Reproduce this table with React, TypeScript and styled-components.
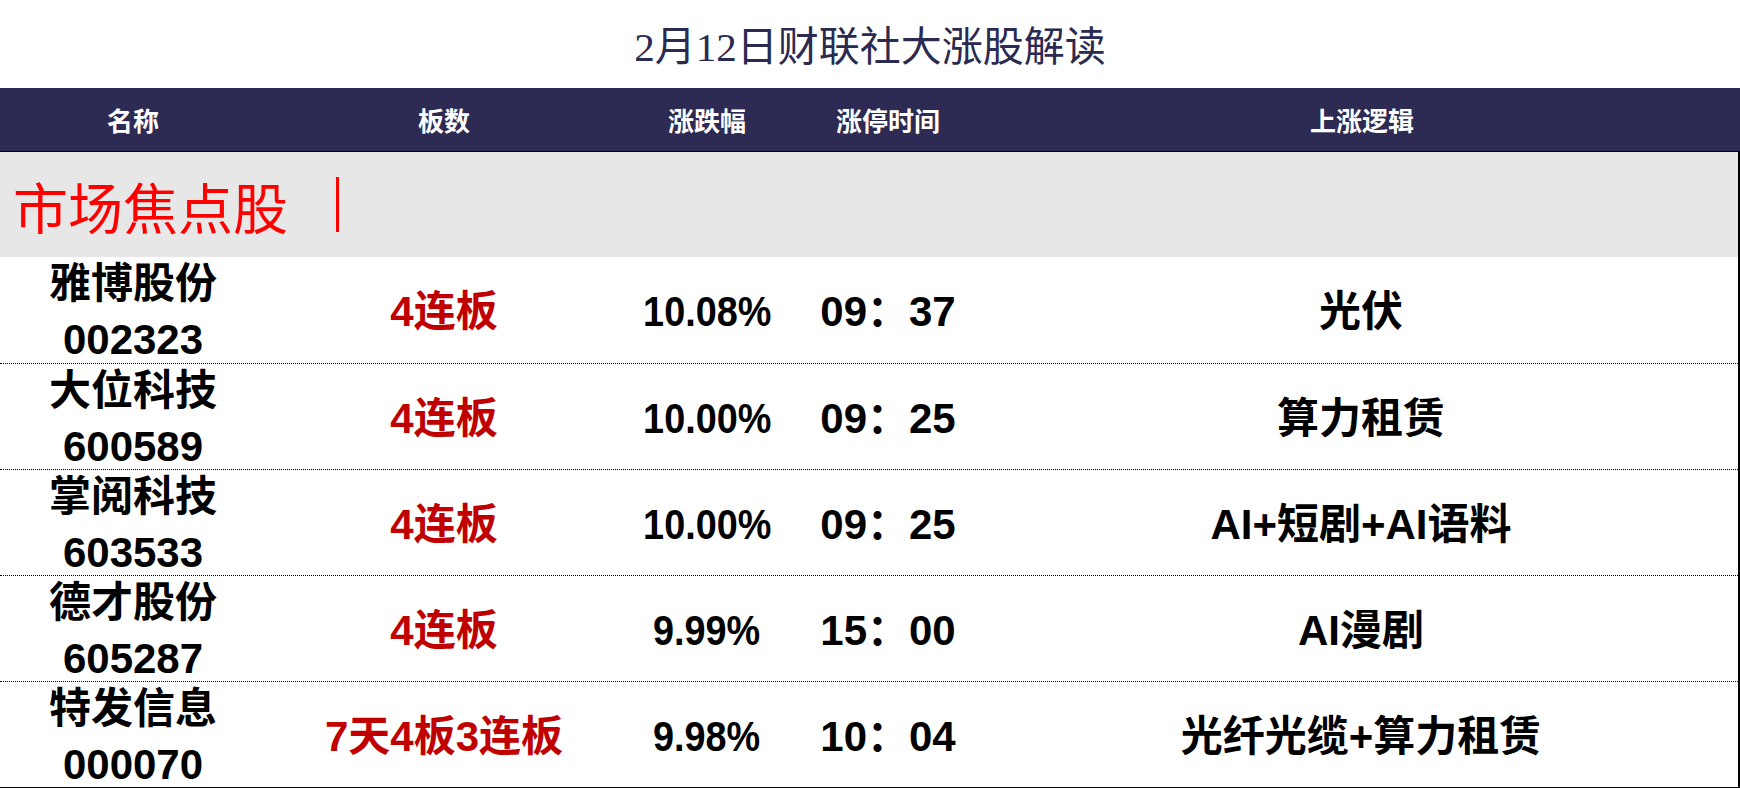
import React from 'react';
import styled, { createGlobalStyle } from 'styled-components';

const GlobalStyle = createGlobalStyle`
  html, body {
    margin: 0;
    padding: 0;
    background: #ffffff;
  }
  body {
    font-family: "Liberation Sans", "Noto Sans CJK SC", sans-serif;
  }
`;

const COLS = '266px 356px 170px 192px 1fr';

const Page = styled.div`
  width: 1740px;
  height: 788px;
  display: flex;
  flex-direction: column;
  overflow: hidden;
`;

const Title = styled.div`
  height: 88px;
  display: flex;
  align-items: center;
  justify-content: center;
  padding-bottom: 2px;
  box-sizing: border-box;
  font-family: "Liberation Serif", "Noto Sans CJK SC", serif;
  font-size: 41px;
  color: #2b2a50;
`;

const HeaderRow = styled.div`
  display: grid;
  grid-template-columns: ${COLS};
  height: 63px;
  background: #2d2b53;
  border-bottom: 1px solid #000;
`;

const HeadCell = styled.div`
  display: flex;
  align-items: center;
  justify-content: center;
  color: #ffffff;
  font-family: "Noto Sans CJK SC", sans-serif;
  font-weight: 700;
  font-size: 26px;
`;

const Body = styled.div`
  flex: 1;
  display: flex;
  flex-direction: column;
  border-right: 2px solid #000;
  border-bottom: 1px solid #000;
`;

const Section = styled.div`
  height: 105px;
  background: #e7e7e7;
  display: flex;
  align-items: center;
  padding-left: 13px;
  gap: 48px;
  font-family: "Noto Sans CJK SC", serif;
  font-size: 55px;
  color: #ff0000;
`;

const SectionBar = styled.span`
  width: 3px;
  height: 55px;
  background: #ff0000;
`;

const Row = styled.div<{ first?: boolean }>`
  display: grid;
  grid-template-columns: ${COLS};
  height: 106px;
  box-sizing: border-box;
  border-top: ${({ first }) => (first ? 'none' : '1px dotted #000')};
`;

const Cell = styled.div<{ red?: boolean }>`
  display: flex;
  align-items: center;
  justify-content: center;
  padding-top: 3px;
  font-size: 42px;
  font-weight: 700;
  line-height: 55px;
  color: ${({ red }) => (red ? '#c00000' : '#000')};
  white-space: nowrap;
`;

const NameCell = styled.div`
  display: flex;
  flex-direction: column;
  align-items: center;
  font-size: 42px;
  font-weight: 700;
  color: #000;
  white-space: nowrap;
`;

const NameText = styled.span`
  line-height: 54px;
`;

const CodeText = styled.span`
  line-height: 42px;
  margin-top: 8px;
`;

const Pct = styled.span`
  display: inline-block;
  transform: scaleX(0.9);
`;

interface Stock {
  name: string;
  code: string;
  board: string;
  pct: string;
  time: string;
  logic: string;
}

const stocks: Stock[] = [
  { name: '雅博股份', code: '002323', board: '4连板', pct: '10.08%', time: '09：37', logic: '光伏' },
  { name: '大位科技', code: '600589', board: '4连板', pct: '10.00%', time: '09：25', logic: '算力租赁' },
  { name: '掌阅科技', code: '603533', board: '4连板', pct: '10.00%', time: '09：25', logic: 'AI+短剧+AI语料' },
  { name: '德才股份', code: '605287', board: '4连板', pct: '9.99%', time: '15：00', logic: 'AI漫剧' },
  { name: '特发信息', code: '000070', board: '7天4板3连板', pct: '9.98%', time: '10：04', logic: '光纤光缆+算力租赁' },
];

const headers = ['名称', '板数', '涨跌幅', '涨停时间', '上涨逻辑'];

export default function App() {
  return (
    <Page>
      <GlobalStyle />
      <Title>2月12日财联社大涨股解读</Title>
      <HeaderRow>
        {headers.map((h) => (
          <HeadCell key={h}>{h}</HeadCell>
        ))}
      </HeaderRow>
      <Body>
        <Section>
          <span>市场焦点股</span>
          <SectionBar />
        </Section>
        {stocks.map((s, i) => (
          <Row key={s.code} first={i === 0}>
            <NameCell>
              <NameText>{s.name}</NameText>
              <CodeText>{s.code}</CodeText>
            </NameCell>
            <Cell red>{s.board}</Cell>
            <Cell>
              <Pct>{s.pct}</Pct>
            </Cell>
            <Cell>{s.time}</Cell>
            <Cell>{s.logic}</Cell>
          </Row>
        ))}
      </Body>
    </Page>
  );
}
